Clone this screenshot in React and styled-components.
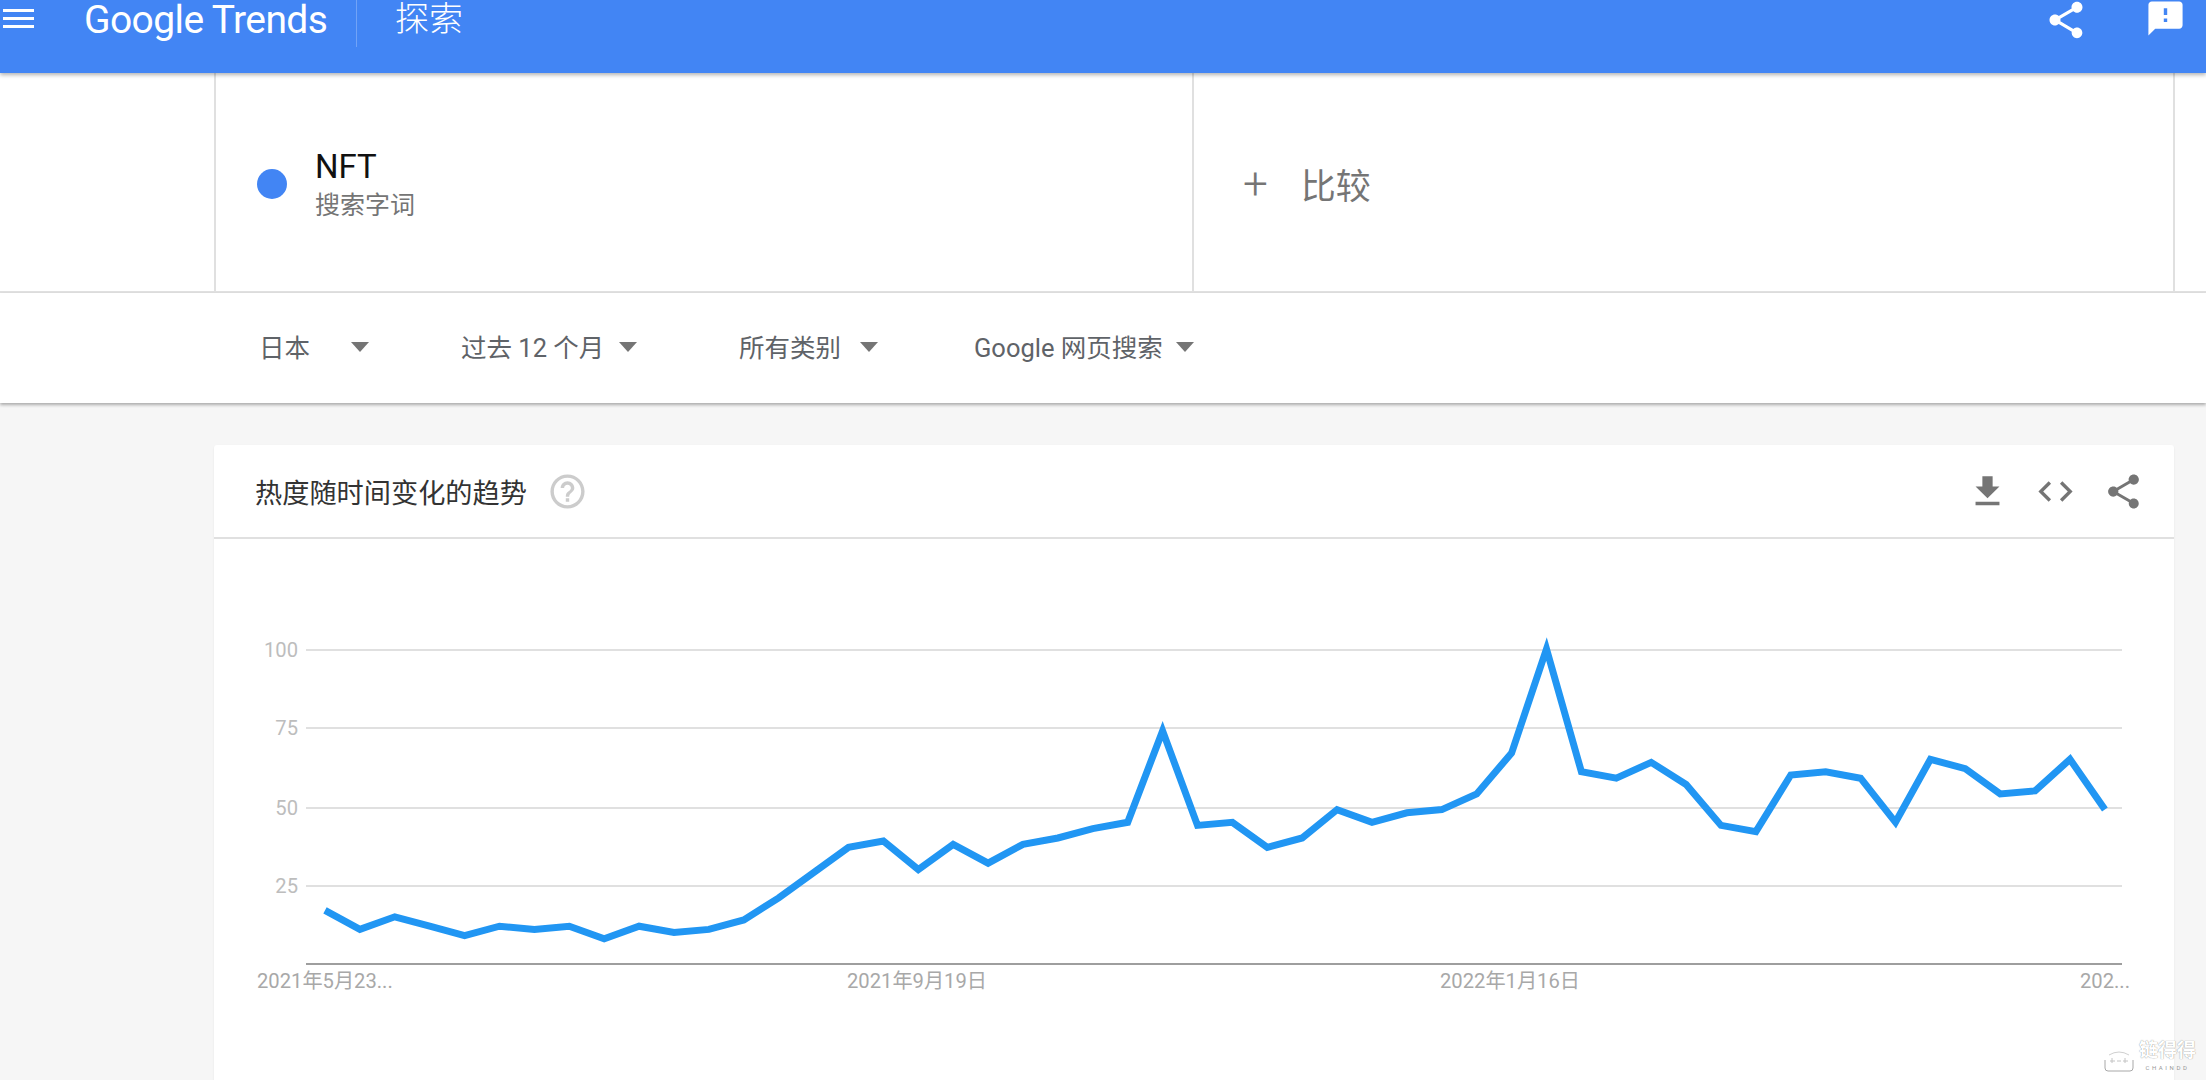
import React from 'react';
import styled, { createGlobalStyle } from 'styled-components';

const FONT = `Roboto, "Noto Sans CJK SC", sans-serif`;

const GlobalStyle = createGlobalStyle`
  html, body {
    margin: 0;
    height: 100%;
    overflow: hidden;
    background: #f6f6f6;
    font-family: ${FONT};
  }
`;

const Page = styled.div`
  position: relative;
  width: 2206px;
  height: 1080px;
  overflow: hidden;
  background: #f6f6f6;
`;

const Header = styled.header`
  position: relative;
  z-index: 2;
  height: 73px;
  display: flex;
  align-items: flex-start;
  background: #4285f4;
  color: #fff;
  box-shadow: 0 2px 4px rgba(0, 0, 0, 0.3);
`;

const Burger = styled.div`
  width: 31px;
  margin: 9px 0 0 3px;
  height: 19px;
  display: flex;
  flex-direction: column;
  justify-content: space-between;

  span {
    display: block;
    height: 3px;
    background: #fff;
  }
`;

const Logo = styled.div`
  margin-left: 50px;
  width: 272px;
  font-size: 39px;
  line-height: 40px;
  letter-spacing: -0.6px;
  white-space: nowrap;
`;

const Divider = styled.div`
  width: 1px;
  height: 47px;
  background: rgba(255, 255, 255, 0.25);
`;

const PageTitle = styled.div`
  margin: 1px 0 0 38px;
  font-size: 34px;
  line-height: 36px;
  font-weight: 300;
`;

const HeaderIcons = styled.div`
  margin: -2px 0 0 auto;
  display: flex;
  align-items: flex-start;
  gap: 57px;
  padding-right: 20px;
`;

const SearchRow = styled.section`
  display: grid;
  grid-template-columns: 214px 978px 981px 1fr;
  height: 220px;
  background: #fff;
  border-bottom: 2px solid #e0e0e0;
  box-sizing: border-box;
`;

const SearchCell = styled.div`
  display: flex;
  align-items: center;
  border-left: ${(p) => (p.$blank ? 'none' : '2px solid #e0e0e0')};
`;

const TermCell = styled(SearchCell)`
  padding-left: 41px;
  gap: 28px;
`;

const Dot = styled.div`
  width: 30px;
  height: 30px;
  margin-top: 4px;
  border-radius: 50%;
  background: #4285f4;
`;

const TermText = styled.div`
  display: flex;
  flex-direction: column;
  gap: 4px;
  margin-top: 6px;
`;

const TermName = styled.div`
  font-size: 33px;
  line-height: 38px;
  color: #111;
`;

const TermType = styled.div`
  font-size: 25px;
  line-height: 32px;
  color: #757575;
`;

const CompareCell = styled(SearchCell)`
  padding-left: 49px;
  gap: 33px;
  color: #757575;
  font-size: 35px;
`;

const PlusSign = styled.span`
  margin-top: 3px;
  font-size: 44px;
  font-weight: 300;
`;

const CompareLabel = styled.span`
  margin-top: 3px;
`;

const FilterBar = styled.section`
  height: 110px;
  box-sizing: border-box;
  padding: 0 0 6px 259px;
  display: grid;
  grid-template-columns: 202px 278px 235px auto;
  justify-content: start;
  align-items: center;
  background: #fff;
  box-shadow: 0 2px 3px rgba(0, 0, 0, 0.3);
`;

const Filter = styled.div`
  display: flex;
  align-items: center;
  gap: ${(p) => p.$gap}px;
  font-size: 25.5px;
  color: #5f6368;
  white-space: nowrap;
`;

const Caret = styled.span`
  width: 0;
  height: 0;
  margin-top: 3px;
  border-left: 9px solid transparent;
  border-right: 9px solid transparent;
  border-top: 10px solid #757575;
`;

const Card = styled.section`
  width: 1960px;
  height: 700px;
  margin: 42px 0 0 214px;
  background: #fff;
  border-radius: 3px 3px 0 0;
  box-shadow: 0 1px 2px rgba(0, 0, 0, 0.08);
`;

const CardHeader = styled.div`
  height: 94px;
  box-sizing: border-box;
  padding: 0 30px 0 41px;
  display: flex;
  align-items: center;
  border-bottom: 2px solid #e0e0e0;
`;

const CardTitle = styled.h2`
  margin: 0 20px 0 0;
  font-size: 27.2px;
  font-weight: 400;
  color: #333;
`;

const CardActions = styled.div`
  margin-left: auto;
  display: flex;
  align-items: center;
  gap: 27px;
`;

const Icon = styled.svg`
  display: block;
  flex: none;
  fill: ${(p) => p.$color};
`;

const ChartSvg = styled.svg`
  display: block;
`;

const Watermark = styled.div`
  position: absolute;
  right: 10px;
  bottom: 8px;
  display: flex;
  align-items: flex-end;
  gap: 5px;
  color: #fff;
  text-shadow: 0 0 1px #777;
`;

const WatermarkText = styled.div`
  display: flex;
  flex-direction: column;
  align-items: center;
`;

const WatermarkName = styled.div`
  font-size: 19px;
  line-height: 20px;
  font-weight: 700;
`;

const WatermarkLatin = styled.div`
  margin-top: 2px;
  font-size: 6px;
  line-height: 9px;
  letter-spacing: 2.6px;
  color: #999;
  text-shadow: none;
`;

const SHARE = 'M18 16.08c-.76 0-1.44.3-1.96.77L8.91 12.7c.05-.23.09-.46.09-.7s-.04-.47-.09-.7l7.05-4.11c.54.5 1.25.81 2.04.81 1.66 0 3-1.34 3-3s-1.34-3-3-3-3 1.34-3 3c0 .24.04.47.09.7L8.04 9.81C7.5 9.31 6.79 9 6 9c-1.66 0-3 1.34-3 3s1.34 3 3 3c.79 0 1.5-.31 2.04-.81l7.12 4.16c-.05.21-.08.43-.08.65 0 1.61 1.31 2.92 2.92 2.92 1.61 0 2.92-1.31 2.92-2.92s-1.31-2.92-2.92-2.92z';
const FEEDBACK = 'M20 2H4c-1.1 0-1.99.9-1.99 2L2 22l4-4h14c1.1 0 2-.9 2-2V4c0-1.1-.9-2-2-2zm-7 12h-2v-2h2v2zm0-4h-2V6h2v4z';
const DOWNLOAD = 'M19 9h-4V3H9v6H5l7 7 7-7zM5 18v2h14v-2H5z';
const CODE = 'M9.4 16.6L4.8 12l4.6-4.6L8 6l-6 6 6 6 1.4-1.4zm5.2 0l4.6-4.6-4.6-4.6L16 6l6 6-6 6-1.4-1.4z';
const HELP = 'M11 18h2v-2h-2v2zm1-16C6.48 2 2 6.48 2 12s4.48 10 10 10 10-4.48 10-10S17.52 2 12 2zm0 18c-4.41 0-8-3.59-8-8s3.59-8 8-8 8 3.59 8 8-3.59 8-8 8zm0-14c-2.21 0-4 1.79-4 4h2c0-1.1.9-2 2-2s2 .9 2 2c0 2-3 1.75-3 5h2c0-2.25 3-2.5 3-5 0-2.21-1.79-4-4-4z';

function MaterialIcon({ d, size, color = '#fff' }) {
  return (
    <Icon viewBox="0 0 24 24" width={size} height={size} $color={color}>
      <path d={d} />
    </Icon>
  );
}

// weekly interest values read off the reference
const VALUES = [
  17, 11, 15, 12, 9, 12, 11, 12, 8, 12, 10, 11, 14, 21, 29, 37, 39, 30, 38, 32, 38, 40, 43, 45, 74, 44,
  45, 37, 40, 49, 45, 48, 49, 54, 67, 100, 61, 59, 64, 57, 44, 42, 60, 61, 59, 45, 65, 62, 54, 55, 65, 49
];

// chart coordinates are relative to the svg, which starts at page x=214, y=539
const X0 = 111;
const STEP = 34.9;
const Y_BASE = 425;
const UNIT = 3.15;

const GRID = [
  { label: '100', y: 111 },
  { label: '75', y: 189 },
  { label: '50', y: 269 },
  { label: '25', y: 347 }
];

const DATES = [
  { label: '2021年5月23...', x: 43 },
  { label: '2021年9月19日', x: 633 },
  { label: '2022年1月16日', x: 1226 },
  { label: '202...', x: 1866 }
];

function TrendChart() {
  const points = VALUES.map((v, i) => `${(X0 + i * STEP).toFixed(1)},${(Y_BASE - v * UNIT).toFixed(1)}`).join(' ');
  return (
    <ChartSvg width="1960" height="606" fontFamily={FONT} fontSize="20.2">
      {GRID.map((g) => (
        <g key={g.label}>
          <line x1="92" x2="1908" y1={g.y} y2={g.y} stroke="#e0e0e0" strokeWidth="2" />
          <text x="84" y={g.y + 7} textAnchor="end" fill="#bdbdbd">{g.label}</text>
        </g>
      ))}
      <line x1="92" x2="1908" y1={Y_BASE} y2={Y_BASE} stroke="#9e9e9e" strokeWidth="2" />
      {DATES.map((d) => (
        <text key={d.label} x={d.x} y={Y_BASE + 24} fill="#a8a8a8">{d.label}</text>
      ))}
      <polyline points={points} fill="none" stroke="#2196f3" strokeWidth="7" strokeLinejoin="miter" />
    </ChartSvg>
  );
}

export default function App() {
  return (
    <Page>
      <GlobalStyle />
      <Header>
        <Burger><span /><span /><span /></Burger>
        <Logo>Google Trends</Logo>
        <Divider />
        <PageTitle>探索</PageTitle>
        <HeaderIcons>
          <MaterialIcon d={SHARE} size={44} />
          <MaterialIcon d={FEEDBACK} size={41} />
        </HeaderIcons>
      </Header>
      <SearchRow>
        <SearchCell $blank />
        <TermCell>
          <Dot />
          <TermText>
            <TermName>NFT</TermName>
            <TermType>搜索字词</TermType>
          </TermText>
        </TermCell>
        <CompareCell>
          <PlusSign>+</PlusSign>
          <CompareLabel>比较</CompareLabel>
        </CompareCell>
        <SearchCell />
      </SearchRow>
      <FilterBar>
        <Filter $gap={41}>日本<Caret /></Filter>
        <Filter $gap={15}>过去 12 个月<Caret /></Filter>
        <Filter $gap={19}>所有类别<Caret /></Filter>
        <Filter $gap={13}>Google 网页搜索<Caret /></Filter>
      </FilterBar>
      <Card>
        <CardHeader>
          <CardTitle>热度随时间变化的趋势</CardTitle>
          <MaterialIcon d={HELP} size={41} color="#ccc" />
          <CardActions>
            <MaterialIcon d={DOWNLOAD} size={41} color="#757575" />
            <MaterialIcon d={CODE} size={41} color="#757575" />
            <MaterialIcon d={SHARE} size={41} color="#757575" />
          </CardActions>
        </CardHeader>
        <TrendChart />
      </Card>
      <Watermark>
        <svg width="30" height="24" viewBox="0 0 30 24" fill="none" stroke="#a8a8a8" strokeWidth="1">
          <path d="M1 12v8q0 3 3 3h22q3 0 3-3v-8" />
          <path d="M5 7q10-6 20 0" stroke="#d0d0d0" />
          <path d="M6 13h5M13 13h4M19 13h5M8 10v5M21 10v5" stroke="#c4c4c4" />
        </svg>
        <WatermarkText>
          <WatermarkName>链得得</WatermarkName>
          <WatermarkLatin>CHAINDD</WatermarkLatin>
        </WatermarkText>
      </Watermark>
    </Page>
  );
}
